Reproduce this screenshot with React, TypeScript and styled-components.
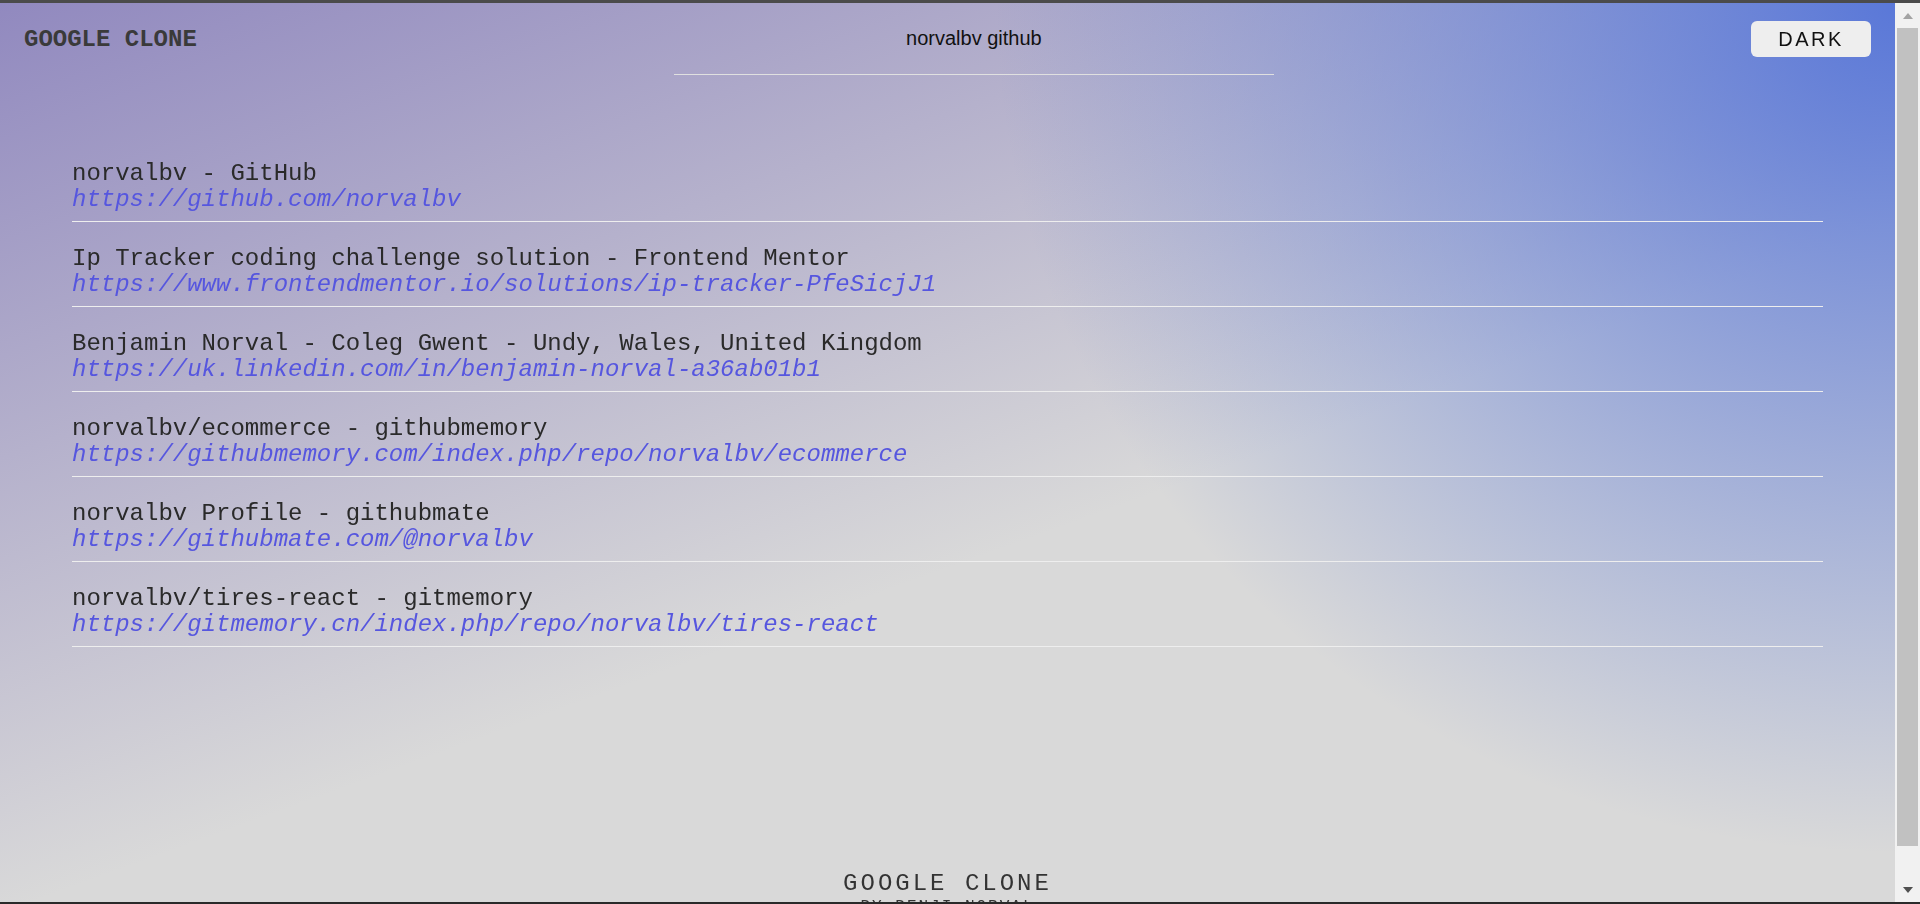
import React from "react";
import styled, { createGlobalStyle } from "styled-components";

const GlobalStyle = createGlobalStyle`
  html, body { margin: 0; padding: 0; }
  html { background: #d9d9d9; }
  body {
    border-top: 3px solid #4b4b4b;
    font-family: "Liberation Sans", Arial, sans-serif;
  }
  * { box-sizing: border-box; }
`;

const Page = styled.div`
  margin-right: 25px;
  min-height: calc(100vh - 3px);
  display: flex;
  flex-direction: column;
  background-color: #d9d9d9;
  background-image:
    radial-gradient(ellipse 900px 850px at 100% 0%, rgba(90, 120, 216, 1) 0%, rgba(90, 120, 216, 0) 100%),
    linear-gradient(160deg, rgba(145, 137, 191, 1) 0%, rgba(145, 137, 191, 0) 56%);
`;

const Header = styled.header`
  display: flex;
  justify-content: space-between;
  align-items: center;
  height: 72px;
  padding: 0 24px;
`;

const Logo = styled.div`
  font-family: "Courier New", "Liberation Mono", monospace;
  font-weight: bold;
  font-size: 24px;
  color: #3a3a3a;
  white-space: nowrap;
`;

const SearchInput = styled.input`
  width: 600px;
  height: 72px;
  border: none;
  border-bottom: 1px solid #e0e0e0;
  background: transparent;
  text-align: center;
  font-family: "Liberation Sans", Arial, sans-serif;
  font-size: 20px;
  color: #111;
  caret-color: #111;
  outline: none;
  padding: 0;
`;

const ModeButton = styled.button`
  width: 120px;
  height: 36px;
  border: none;
  border-radius: 6px;
  background: #eeeeee;
  color: #111;
  font-family: "Liberation Sans", Arial, sans-serif;
  font-size: 20px;
  letter-spacing: 2.5px;
  cursor: pointer;
`;

const Results = styled.main`
  margin: 62px 72px 0;
  display: flex;
  flex-direction: column;
`;

const ResultItem = styled.a`
  display: block;
  padding: 24px 0 8px;
  border-bottom: 1px solid #eeeeee;
  text-decoration: none;
  font-family: "Courier New", "Liberation Mono", monospace;
  font-size: 24px;
  line-height: 26px;
`;

const ResultTitle = styled.div`
  color: #2a2a2a;
  white-space: nowrap;
`;

const ResultUrl = styled.div`
  color: #5656df;
  font-style: italic;
  white-space: nowrap;
`;

const Footer = styled.footer`
  margin-top: 224px;
  padding-bottom: 24px;
  display: flex;
  flex-direction: column;
  align-items: center;
  font-family: "Courier New", "Liberation Mono", monospace;
  color: #333;
`;

const FooterTitle = styled.div`
  font-size: 24px;
  line-height: 26px;
  letter-spacing: 3px;
`;

const FooterSub = styled.div`
  font-size: 16px;
  line-height: 20px;
  letter-spacing: 2px;
`;

/* Window chrome drawn over the page: classic scrollbar and bottom edge */
const Scrollbar = styled.div`
  position: fixed;
  top: 3px;
  right: 0;
  bottom: 2px;
  width: 25px;
  background: #f1f1f1;
  display: flex;
  flex-direction: column;
  align-items: center;
`;

const ArrowBox = styled.div`
  height: 25px;
  width: 100%;
  display: flex;
  align-items: center;
  justify-content: center;
`;

const Arrow = styled.span<{ $down?: boolean }>`
  width: 0;
  height: 0;
  border-left: 5.5px solid transparent;
  border-right: 5.5px solid transparent;
  ${(p) =>
    p.$down
      ? "border-top: 6px solid #505050;"
      : "border-bottom: 6px solid #a3a3a3;"}
`;

const Track = styled.div`
  flex: 1;
  width: 100%;
  padding: 0 2px;
`;

const Thumb = styled.div`
  height: 818px;
  background: #c1c1c1;
`;

const BottomEdge = styled.div`
  position: fixed;
  left: 0;
  right: 0;
  bottom: 0;
  height: 2px;
  background: #2a2a2a;
`;

const results: [string, string][] = [
  ["norvalbv - GitHub", "https://github.com/norvalbv"],
  [
    "Ip Tracker coding challenge solution - Frontend Mentor",
    "https://www.frontendmentor.io/solutions/ip-tracker-PfeSicjJ1",
  ],
  [
    "Benjamin Norval - Coleg Gwent - Undy, Wales, United Kingdom",
    "https://uk.linkedin.com/in/benjamin-norval-a36ab01b1",
  ],
  [
    "norvalbv/ecommerce - githubmemory",
    "https://githubmemory.com/index.php/repo/norvalbv/ecommerce",
  ],
  ["norvalbv Profile - githubmate", "https://githubmate.com/@norvalbv"],
  [
    "norvalbv/tires-react - gitmemory",
    "https://gitmemory.cn/index.php/repo/norvalbv/tires-react",
  ],
];

export default function App() {
  const [query, setQuery] = React.useState("norvalbv github");
  return (
    <>
      <GlobalStyle />
      <Page>
        <Header>
          <Logo>GOOGLE CLONE</Logo>
          <SearchInput
            value={query}
            onChange={(e) => setQuery(e.target.value)}
            autoFocus
          />
          <ModeButton>DARK</ModeButton>
        </Header>
        <Results>
          {results.map(([title, url]) => (
            <ResultItem key={url} href={url} onClick={(e) => e.preventDefault()}>
              <ResultTitle>{title}</ResultTitle>
              <ResultUrl>{url}</ResultUrl>
            </ResultItem>
          ))}
        </Results>
        <Footer>
          <FooterTitle>GOOGLE CLONE</FooterTitle>
          <FooterSub>BY BENJI NORVAL</FooterSub>
        </Footer>
      </Page>
      <Scrollbar aria-hidden>
        <ArrowBox>
          <Arrow />
        </ArrowBox>
        <Track>
          <Thumb />
        </Track>
        <ArrowBox>
          <Arrow $down />
        </ArrowBox>
      </Scrollbar>
      <BottomEdge />
    </>
  );
}
